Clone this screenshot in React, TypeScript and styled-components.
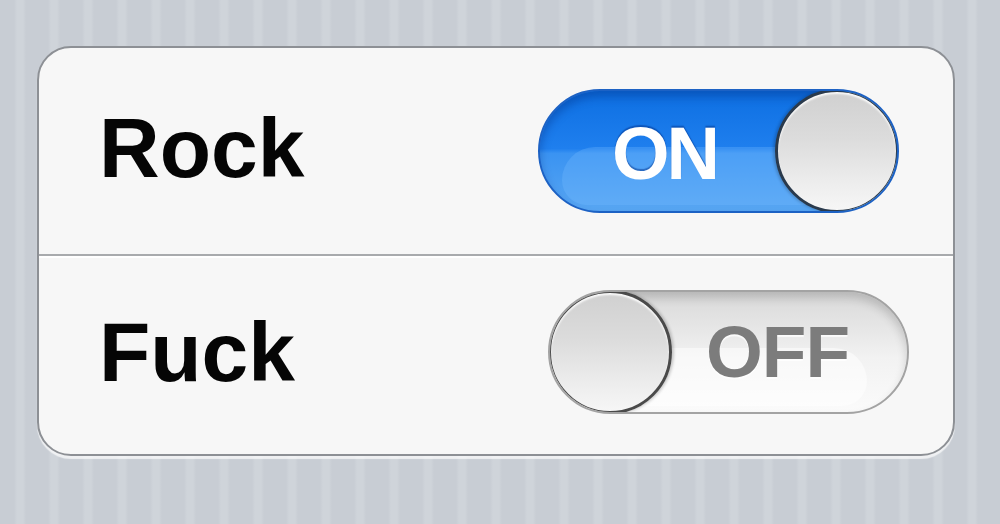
import React from "react"
import styled, { createGlobalStyle } from "styled-components"

const GlobalStyle = createGlobalStyle`
  html, body {
    margin: 0;
    padding: 0;
  }
  body {
    font-family: "Liberation Sans", Arial, sans-serif;
    background: #c8cdd4;
  }
`

const Page = styled.div`
  width: 1000px;
  height: 524px;
  box-sizing: border-box;
  padding: 46px 45px 0 37px;
  background-color: #c8cdd4;
  background-image: repeating-linear-gradient(
    90deg,
    #c8cdd4 0px,
    #c8cdd4 22px,
    #cfd4da 25px,
    #cfd4da 31px,
    #c8cdd4 34px
  );
  background-position: -8px 0;
  overflow: hidden;
`

const Group = styled.div`
  width: 918px;
  box-sizing: border-box;
  background: #f7f7f7;
  border: 2px solid #8d9095;
  border-radius: 34px;
  box-shadow: 0 3px 1px rgba(255, 255, 255, 0.7);
  overflow: hidden;
`

const Row = styled.div<{ $height: number }>`
  height: ${(p) => p.$height}px;
  display: flex;
  align-items: center;
  justify-content: space-between;
  padding: 0 48px 0 60px;

  &:not(:last-child) {
    border-bottom: 2px solid #a8aaad;
    box-shadow: 0 2px 0 #ffffff;
  }
`

const Label = styled.span`
  font-size: 84px;
  font-weight: 700;
  color: #050505;
  margin-top: -6px;
`

const Track = styled.div<{ $on: boolean; $shift: number; $lift: number }>`
  position: relative;
  width: 361px;
  height: 124px;
  box-sizing: border-box;
  border-radius: 62px;
  overflow: hidden;
  display: flex;
  flex-direction: ${(p) => (p.$on ? "row" : "row-reverse")};
  align-items: center;
  margin-right: ${(p) => p.$shift}px;
  margin-bottom: ${(p) => p.$lift}px;
  border: 2px solid ${(p) => (p.$on ? "#1d62c4" : "#a3a3a3")};
  background: ${(p) =>
    p.$on
      ? "linear-gradient(180deg, #0d6fe2 0%, #1f7fee 48%, #3a93f2 52%, #58a6f2 100%)"
      : "linear-gradient(180deg, #d9d9d9 0%, #e6e6e6 30%, #f2f2f2 55%, #fbfbfb 100%)"};
  box-shadow: ${(p) =>
    p.$on
      ? "inset 0 6px 8px rgba(0, 40, 120, 0.35)"
      : "inset 0 6px 10px rgba(0, 0, 0, 0.16)"};

  &::after {
    content: "";
    position: absolute;
    left: 22px;
    right: 40px;
    top: 56px;
    bottom: 6px;
    border-radius: 40px 40px 30px 30px;
    background: ${(p) =>
      p.$on ? "rgba(120, 190, 255, 0.3)" : "rgba(255, 255, 255, 0.5)"};
    pointer-events: none;
  }
`

const SwitchText = styled.span<{ $on: boolean }>`
  position: relative;
  z-index: 1;
  flex: 1;
  text-align: center;
  font-size: ${(p) => (p.$on ? 74 : 73)}px;
  font-weight: 700;
  letter-spacing: ${(p) => (p.$on ? -3 : -1)}px;
  color: ${(p) => (p.$on ? "#ffffff" : "#7c7c7c")};
  text-shadow: ${(p) =>
    p.$on ? "0 -2px 1px rgba(0, 50, 140, 0.5)" : "0 2px 1px rgba(255,255,255,0.8)"};
  padding: ${(p) => (p.$on ? "4px 0 0 12px" : "0 22px 0 0")};
`

const Knob = styled.div<{ $on: boolean }>`
  position: relative;
  z-index: 2;
  flex: none;
  width: 124px;
  height: 124px;
  margin: -2px;
  box-sizing: border-box;
  border-radius: 50%;
  border: 3px solid ${(p) => (p.$on ? "#2a3a4c" : "#4a4a4a")};
  background: linear-gradient(180deg, #d0d0d0 0%, #dcdcdc 40%, #ececec 75%, #f6f6f6 100%);
  box-shadow: inset 0 2px 2px rgba(255, 255, 255, 0.9),
    ${(p) => (p.$on ? "-2px 0 3px rgba(0,0,0,0.2)" : "2px 0 3px rgba(0,0,0,0.2)")};
`

const Toggle = ({ on, shift, lift }: { on: boolean; shift: number; lift: number }) => (
  <Track $on={on} $shift={shift} $lift={lift}>
    <SwitchText $on={on}>{on ? "ON" : "OFF"}</SwitchText>
    <Knob $on={on} />
  </Track>
)

const settings = [
  { label: "Rock", on: true, height: 206, shift: 6, lift: 0 },
  { label: "Fuck", on: false, height: 198, shift: -4, lift: 7 }
]

export default function App() {
  return (
    <>
      <GlobalStyle />
      <Page>
        <Group>
          {settings.map((s) => (
            <Row key={s.label} $height={s.height}>
              <Label>{s.label}</Label>
              <Toggle on={s.on} shift={s.shift} lift={s.lift} />
            </Row>
          ))}
        </Group>
      </Page>
    </>
  )
}
